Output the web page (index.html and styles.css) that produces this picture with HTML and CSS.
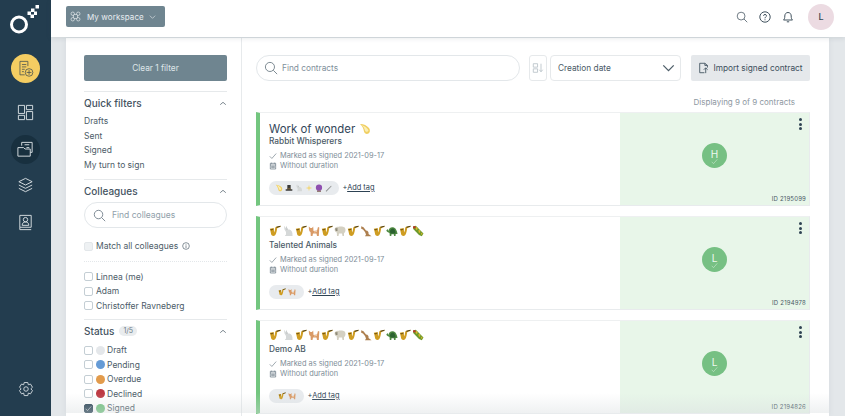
FILE: index.html
```html
<!DOCTYPE html>
<html lang="en">
<head>
<meta charset="utf-8">
<title>Contracts</title>
<link rel="stylesheet" href="styles.css">
</head>
<body>
<svg class="defs" width="0" height="0" aria-hidden="true">
  <symbol id="sax" viewBox="0 0 12 12"><path d="M11.500 .8 7 1.700 6.200 2.800 5.500 7.500 4.500 4 5 3 .8 3.800 1.200 5 2.200 9.500C2.600 11 5 11.500 6.300 10 7.500 8.500 7.800 5 8.300 3L11.500 2Z" fill="#cf9d22"/><path d="M1.200 4.300 4.300 3.700 4.800 4.500 2 5.500Z" fill="#7a5a12"/><path d="M7 2 11.500 .8 11.500 1.600 8 2.800Z" fill="#3c3420"/></symbol>
  <symbol id="rabbit" viewBox="0 0 12 12"><path d="M2 .8 5 4.500 7.500 4.500C9.500 5 10.800 7 10.500 11H3.500C2.500 11 3 10 4 9.800L4 7 2.500 4.500Z" fill="#d5d8d8"/><path d="M4 .8 6 4.500 4.500 5Z" fill="#b9bdbd"/></symbol>
  <symbol id="cat" viewBox="0 0 12 12"><path d="M.8 1.500 2.500 3H4L5.200 1.500 5.500 6 9 5.500 10 2 11.300 2.500 10.800 11H9L8.500 8.500H5L4.500 11H2.800L2.500 7C1.300 6.500 .8 5 .8 1.500Z" fill="#d99a66"/><path d="M6 6.500 9 6V7L6 7.500Z" fill="#f0d0b0"/></symbol>
  <symbol id="sheep" viewBox="0 0 12 12"><path d="M.6 4.500C.6 2.500 3 1.500 4 2 6 1.300 9.500 1.500 11 2.800 12 5 11.500 7.500 10 8.300V11H8.500L8 8.500H5L4.500 11H3L2.800 7.500C1.500 7 .6 6 .6 4.500Z" fill="#d4d0c2"/><path d="M1 3.500 3.500 3 3.500 6 1.800 6Z" fill="#8f8a78"/></symbol>
  <symbol id="roo" viewBox="0 0 12 12"><path d="M1.200 1.200 3.500 2.200 6 5.500C8 5.500 9 7.500 8.500 9L11.500 11.200H5L6 9.500 5 7 3 4.500 1.200 3.800Z" fill="#ad7f4f"/></symbol>
  <symbol id="turtle" viewBox="0 0 12 12"><path d="M2.500 6C2.500 3 5 1.800 7 2.200 9.500 2.500 11 5.500 11.500 9H9.700L9.500 11H8L7.800 9.300H5.500L5.300 11H3.800L3.500 8C2.300 7.500 .5 6.500 .3 5.500L1.500 4Z" fill="#4f8a42"/><path d="M4 6.500C4.500 3.500 6.500 3 8 4 9.200 5 9.500 7 9.500 8.500H4.500Z" fill="#2c6230"/></symbol>
  <symbol id="bug" viewBox="0 0 12 12"><path d="M1.200 1.500 3.800 .8 11.500 8.500 9.800 11.300 7 10 1.200 4Z" fill="#6d9a2c"/><path d="M3.300 2.500 4.800 2 5.800 4 4.300 5ZM6.300 5.200 7.800 5 8.500 7 7 8ZM9 8 10 7.800 10.500 9 9.500 10Z" fill="#e0b62c"/><circle cx="2.300" cy="2.300" r="1.300" fill="#b5382a"/></symbol>
  <symbol id="comet" viewBox="0 0 12 12"><path d="M1 1C4 .8 8 2.500 10 5 11.500 7 11 9.500 9.500 10.500 7.500 11.500 5.500 10.500 5 8.500 4.500 6 3.500 3 1 1Z" fill="#f0cf62"/><path d="M2.500 2C6 3 8.500 5 9.500 7.500 8.500 9.500 6.500 9 6 7.500 5.500 5.500 4.500 3.500 2.500 2Z" fill="#fbeeb4"/></symbol>
  <symbol id="hat" viewBox="0 0 12 12"><path d="M3.500 1.500H8.500V8H11V10H1V8H3.500Z" fill="#3a3a38"/><path d="M3.500 6.500H8.500V8H3.500Z" fill="#8a6b3c"/></symbol>
  <symbol id="spark" viewBox="0 0 12 12"><path d="M6 1 7 5 11 6 7 7 6 11 5 7 1 6 5 5Z" fill="#f2d779"/></symbol>
  <symbol id="ball" viewBox="0 0 12 12"><circle cx="6" cy="5.500" r="4.700" fill="#8f4fb0"/><path d="M3 10H9V11.500H3Z" fill="#6d4a3a"/></symbol>
  <symbol id="wand" viewBox="0 0 12 12"><path d="M1 10.500 9 2.500 10 3.500 2 11.500Z" fill="#8d8f90"/><path d="M9 1.500 10.500 3 9.500 4Z" fill="#dedede"/></symbol>
  <symbol id="check" viewBox="0 0 12 12"><path d="M1.200 6.500 4.300 9.700 10.800 2.300" fill="none" stroke="currentColor" stroke-width=".9"/></symbol>
  <symbol id="cal" viewBox="0 0 12 12"><path d="M2 2H10V10.500H2ZM2 4.500H10M3.500 1V2.500M8.500 1V2.500M4 6.500H8V8.500H4Z" fill="none" stroke="currentColor"/></symbol>
  <symbol id="search" viewBox="0 0 16 16"><circle cx="6.800" cy="6.800" r="5.200" fill="none" stroke="currentColor"/><path d="M10.600 10.600 15 15" stroke="currentColor" fill="none"/></symbol>
  <symbol id="chev" viewBox="0 0 10 6"><path d="M1 1 5 5 9 1" fill="none" stroke="currentColor"/></symbol>
  <symbol id="up" viewBox="0 0 10 6"><path d="M1.500 4.500 5 1.500 8.500 4.500" fill="none" stroke="currentColor"/></symbol>
</svg>

<div class="app">
  <nav class="rail">
    <svg class="logo" viewBox="0 0 51 38" width="51" height="38" aria-label="Logo">
      <circle cx="19" cy="24.500" r="7.500" fill="none" stroke="#fff" stroke-width="3"/>
      <path d="M35.500 5h3.500v3.500h-3.500zM31 8.500h3.500V12H31zM34 11.500h3V15h-3zM27.500 11.500H31V15h-3.500zM30.500 14.500H34V18h-3.500z" fill="#fff"/>
    </svg>
    <div class="rail-btn rail-yellow">
      <svg viewBox="0 0 24 24" width="19" height="19" fill="none" stroke="#4a5250"><path d="M15 9V3H5V20H11M7.500 7H13M7.500 10H13M7.500 13H11M7.500 16H10"/><circle cx="16.500" cy="17" r="4.800"/><path d="M16.500 14V20M13.500 17H19.500"/></svg>
    </div>
    <div class="rail-btn">
      <svg viewBox="0 0 20 20" width="19" height="19" fill="none" stroke="#d7dee2"><path d="M2.500 2.500H9V11H2.500ZM11 2.500H17.500V7H11ZM11 9H17.500V17.500H11ZM2.500 13H9V17.500H2.500Z"/></svg>
    </div>
    <div class="rail-btn rail-dark">
      <svg viewBox="0 0 20 20" width="19" height="19" fill="none" stroke="#d7dee2"><path d="M6 6V2.500H17V13H15M2 8H8L9.500 9.500H15V17H2ZM9 5H14M11 8H14"/></svg>
    </div>
    <div class="rail-btn">
      <svg viewBox="0 0 20 20" width="19" height="19" fill="none" stroke="#d7dee2"><path d="M10 2.500 17 6 10 9.500 3 6ZM3 9.500 10 13 17 9.500M3 13 10 16.500 17 13"/></svg>
    </div>
    <div class="rail-btn">
      <svg viewBox="0 0 20 20" width="19" height="19" fill="none" stroke="#d7dee2"><path d="M4 2.500H16V15H4ZM4 15V17.500H16M6.500 13C6.500 10.500 8 9.500 10 9.500S13.500 10.500 13.500 13Z"/><circle cx="10" cy="7" r="2.300"/></svg>
    </div>
    <div class="rail-btn rail-gear">
      <svg viewBox="0 0 20 20" width="18" height="18" fill="none" stroke="#d7dee2"><path d="M8 2H12L12.600 4.500 15 3.700 17.200 7.300 15.400 9 17.200 11 15 14.600 12.600 13.700 12 16.500H8L7.400 13.700 5 14.600 2.800 11 4.600 9 2.800 7.300 5 3.700 7.400 4.500Z" transform="translate(0 .8)"/><circle cx="10" cy="10" r="2.500"/></svg>
    </div>
  </nav>

  <div class="shell">
    <header class="topbar">
      <button class="workspace">
        <svg viewBox="0 0 16 16" width="11" height="11" fill="none" stroke="#e6ebee"><circle cx="4" cy="4" r="2.500"/><circle cx="12" cy="4" r="2.500"/><circle cx="4" cy="12" r="2.500"/><circle cx="12" cy="12" r="2.500"/><path d="M5 6V10M11 6V10M6 5H10M6 11H10"/></svg>
        <span>My workspace</span>
        <svg class="ws-chev" width="7" height="4"><use href="#chev"/></svg>
      </button>
      <div class="top-icons">
        <svg width="12" height="12" class="ti"><use href="#search"/></svg>
        <svg class="ti" viewBox="0 0 12 12" width="12" height="12" fill="none" stroke="currentColor"><circle cx="6" cy="6" r="5.200"/><path d="M4.500 4.800C4.500 3 7.500 3 7.500 4.800 7.500 6 6 6 6 7.300M6 8.300V9.300"/></svg>
        <svg class="ti" viewBox="0 0 12 12" width="12" height="12" fill="none" stroke="currentColor"><path d="M1.500 9H10.500C9.500 8 9.200 7 9.200 5 9.200 3 8 1.500 6 1.500S2.800 3 2.800 5C2.800 7 2.500 8 1.500 9ZM4.800 10.800H7.200"/></svg>
        <div class="me">L</div>
      </div>
    </header>

    <main class="panel">
      <aside class="filters">
        <button class="clear">Clear 1 filter</button>
        <section class="fsec fsec-quick">
          <h3>Quick filters <svg width="8" height="5"><use href="#up"/></svg></h3>
          <ul class="links"><li>Drafts</li><li>Sent</li><li>Signed</li><li>My turn to sign</li></ul>
        </section>
        <section class="fsec fsec-coll">
          <h3>Colleagues <svg width="8" height="5"><use href="#up"/></svg></h3>
          <div class="field field-sm">
            <svg width="13" height="13"><use href="#search"/></svg>
            <span>Find colleagues</span>
          </div>
          <div class="match">
            <span class="box box-fill"></span>Match all colleagues
            <svg viewBox="0 0 12 12" width="8" height="8" fill="none" stroke="currentColor"><circle cx="6" cy="6" r="5"/><path d="M6 5V9M6 3V4"/></svg>
          </div>
          <div class="checks">
            <div class="chk"><span class="box"></span>Linnea (me)</div>
            <div class="chk"><span class="box"></span>Adam</div>
            <div class="chk"><span class="box"></span>Christoffer Ravneberg</div>
          </div>
        </section>
        <section class="fsec fsec-status">
          <h3><span class="st">Status <em>1/5</em></span> <svg width="8" height="5"><use href="#up"/></svg></h3>
          <div class="chk"><span class="box"></span><i class="dot dot-draft"></i>Draft</div>
          <div class="chk"><span class="box"></span><i class="dot dot-pending"></i>Pending</div>
          <div class="chk"><span class="box"></span><i class="dot dot-overdue"></i>Overdue</div>
          <div class="chk"><span class="box"></span><i class="dot dot-declined"></i>Declined</div>
          <div class="chk"><span class="box box-on"><svg width="7" height="7"><use href="#check"/></svg></span><i class="dot dot-signed"></i>Signed</div>
        </section>
      </aside>

      <section class="list">
        <div class="toolbar">
          <div class="field field-lg">
            <svg width="14" height="14"><use href="#search"/></svg>
            <span>Find contracts</span>
          </div>
          <div class="sort">
            <svg viewBox="0 0 14 14" width="14" height="14" fill="none" stroke="#b9c2c8"><path d="M1.500 2H6.500V6H1.500ZM1.500 8H6.500V12H1.500ZM10.500 2V11M8.500 9 10.500 11.500 12.500 9"/></svg>
          </div>
          <div class="select">Creation date <svg width="13" height="8"><use href="#chev"/></svg></div>
          <button class="import">
            <svg viewBox="0 0 14 14" width="12" height="12" fill="none" stroke="#3d4f5c"><path d="M7.500 12.500H2V1.500H8L11 4V6.500M8 1.500V4H11M9 13V7M6.800 9 9 6.800 11.200 9"/></svg>
            Import signed contract
          </button>
        </div>
        <p class="count">Displaying 9 of 9 contracts</p>

        <article class="card">
          <div class="info">
            <h2 class="title">Work of wonder <svg class="em-title" width="12" height="12"><use href="#comet"/></svg></h2>
            <p class="org">Rabbit Whisperers</p>
            <p class="meta"><svg width="8" height="8"><use href="#check"/></svg>Marked as signed 2021-09-17</p>
            <p class="meta"><svg width="8" height="8"><use href="#cal"/></svg>Without duration</p>
            <div class="tags">
              <span class="tag"><svg width="8" height="8"><use href="#comet"/></svg><svg width="8" height="8"><use href="#hat"/></svg><svg width="8" height="8"><use href="#rabbit"/></svg><svg width="8" height="8"><use href="#spark"/></svg><svg width="8" height="8"><use href="#ball"/></svg><svg width="8" height="8"><use href="#wand"/></svg></span>
              <span class="add">+<u>Add tag</u></span>
            </div>
          </div>
          <div class="side">
            <span class="more"><b></b><b></b><b></b></span>
            <div class="avatar">H<svg width="7" height="7"><use href="#check"/></svg></div>
            <span class="cid">ID 2195099</span>
          </div>
        </article>

        <article class="card">
          <div class="info">
            <h2 class="title title-em"><svg width="12" height="12"><use href="#sax"/></svg><svg width="12" height="12"><use href="#rabbit"/></svg><svg width="12" height="12"><use href="#sax"/></svg><svg width="12" height="12"><use href="#cat"/></svg><svg width="12" height="12"><use href="#sax"/></svg><svg width="12" height="12"><use href="#sheep"/></svg><svg width="12" height="12"><use href="#sax"/></svg><svg width="12" height="12"><use href="#roo"/></svg><svg width="12" height="12"><use href="#sax"/></svg><svg width="12" height="12"><use href="#turtle"/></svg><svg width="12" height="12"><use href="#sax"/></svg><svg width="12" height="12"><use href="#bug"/></svg></h2>
            <p class="org">Talented Animals</p>
            <p class="meta"><svg width="8" height="8"><use href="#check"/></svg>Marked as signed 2021-09-17</p>
            <p class="meta"><svg width="8" height="8"><use href="#cal"/></svg>Without duration</p>
            <div class="tags">
              <span class="tag"><svg width="8" height="8"><use href="#sax"/></svg><svg width="8" height="8"><use href="#cat"/></svg></span>
              <span class="add">+<u>Add tag</u></span>
            </div>
          </div>
          <div class="side">
            <span class="more"><b></b><b></b><b></b></span>
            <div class="avatar">L<svg width="7" height="7"><use href="#check"/></svg></div>
            <span class="cid">ID 2194978</span>
          </div>
        </article>

        <article class="card">
          <div class="info">
            <h2 class="title title-em"><svg width="12" height="12"><use href="#sax"/></svg><svg width="12" height="12"><use href="#rabbit"/></svg><svg width="12" height="12"><use href="#sax"/></svg><svg width="12" height="12"><use href="#cat"/></svg><svg width="12" height="12"><use href="#sax"/></svg><svg width="12" height="12"><use href="#sheep"/></svg><svg width="12" height="12"><use href="#sax"/></svg><svg width="12" height="12"><use href="#roo"/></svg><svg width="12" height="12"><use href="#sax"/></svg><svg width="12" height="12"><use href="#turtle"/></svg><svg width="12" height="12"><use href="#sax"/></svg><svg width="12" height="12"><use href="#bug"/></svg></h2>
            <p class="org">Demo AB</p>
            <p class="meta"><svg width="8" height="8"><use href="#check"/></svg>Marked as signed 2021-09-17</p>
            <p class="meta"><svg width="8" height="8"><use href="#cal"/></svg>Without duration</p>
            <div class="tags">
              <span class="tag"><svg width="8" height="8"><use href="#sax"/></svg><svg width="8" height="8"><use href="#cat"/></svg></span>
              <span class="add">+<u>Add tag</u></span>
            </div>
          </div>
          <div class="side">
            <span class="more"><b></b><b></b><b></b></span>
            <div class="avatar">L<svg width="7" height="7"><use href="#check"/></svg></div>
            <span class="cid">ID 2194826</span>
          </div>
        </article>
      </section>
    </main>
    <div class="fade"></div>
  </div>
</div>
</body>
</html>
```

FILE: styles.css
```css
* { box-sizing: border-box; }
html, body { margin: 0; height: 100%; overflow: hidden; }
body { font-family: Inter, "Noto Sans", "Liberation Sans", sans-serif; color: #3d4f5c; background: #fff; }
.defs { position: absolute; }
h2, h3, p, ul { margin: 0; padding: 0; }
button { font: inherit; border: 0; }
svg { display: block; flex: none; }

.app { display: flex; width: 845px; height: 416px; }

.rail { width: 51px; background: #233d4f; display: flex; flex-direction: column; align-items: center; }
.logo { margin-bottom: 16px; }
.rail-btn { width: 29px; height: 29px; border-radius: 50%; display: flex; align-items: center; justify-content: center; margin-bottom: 7.500px; }
.rail-yellow { background: #f4cd62; margin-bottom: 15px; }
.rail-dark { background: #18303f; }
.rail-gear { margin-top: auto; margin-bottom: 12.500px; }

.shell { position: relative; flex: 1; min-width: 0; background: #e3e7ea; display: flex; flex-direction: column; }
.topbar { height: 37px; flex: none; background: #fff; display: flex; align-items: center; justify-content: space-between; padding: 0 11px 4px 15px; box-shadow: 0 1px 5px rgba(60, 75, 85, .14); position: relative; z-index: 2; }
.workspace { display: flex; align-items: center; height: 21px; width: 99px; background: #6f8590; color: #e8edf0; border-radius: 2px; padding: 0 4px; font-size: 8px; }
.workspace span { margin-left: 6px; white-space: nowrap; letter-spacing: .1px; }
.ws-chev { margin-left: 5px; color: #dfe5e8; }
.top-icons { display: flex; align-items: center; color: #41525e; }
.ti { margin-right: 11px; }
.ti + .me { margin-left: 3px; }
.me { width: 26px; height: 26px; border-radius: 50%; background: #ecdbe2; display: flex; align-items: center; justify-content: center; font-size: 9px; font-weight: 500; color: #33444f; }

.panel { flex: 1; min-height: 0; margin: 1px 16px 0 15px; background: #fff; display: flex; overflow: hidden; box-shadow: 0 0 6px rgba(60, 75, 85, .08); }

.filters { width: 176px; flex: none; padding: 17px 14px 0 18px; border-right: 1px solid #e7eaec; font-size: 8.500px; }
.clear { display: block; width: 100%; height: 26px; background: #6f8590; color: #dfe6ea; border-radius: 2px; font-size: 8.300px; }
.fsec { border-top: 1px solid #e6e9eb; padding-top: 5px; }
h3 { display: flex; align-items: center; justify-content: space-between; font-size: 10px; font-weight: 500; line-height: 13px; color: #44535f; margin-bottom: 4px; }
h3 svg { color: #5c6a74; }
.links { list-style: none; margin-top: 1px; }
.links li { line-height: 14.600px; color: #4c5c68; }
.fsec-quick { margin-top: 10px; }
.fsec-coll { margin-top: 7px; }
.fsec-status { margin-top: 6px; }
.fsec-status h3 { margin-bottom: 5px; }
.field { display: flex; align-items: center; background: #fff; border: 1px solid #e3e7ea; border-radius: 13px; color: #6c7a84; }
.field-sm { height: 26px; padding-left: 8px; gap: 6px; margin-top: 2px; color: #657480; }
.field-sm span { color: #90a0aa; }
.match { display: flex; align-items: center; height: 14px; margin-top: 11px; color: #4c5c68; }
.match svg { margin-left: 4px; }
.checks { border-top: 1px dotted #e3e7ea; margin-top: 8px; padding-top: 7px; }
.chk { display: flex; align-items: center; height: 14.500px; color: #4c5c68; white-space: nowrap; }
.box { width: 9px; height: 9px; border: 1px solid #c4ced4; border-radius: 2px; margin-right: 3px; display: flex; align-items: center; justify-content: center; flex: none; }
.box-fill { background: #eef1f3; border-color: #e3e7ea; }
.box-on { background: #233d4f; border-color: #233d4f; color: #fff; }
.dot { width: 9px; height: 9px; border-radius: 50%; margin-right: 2px; flex: none; }
.dot-draft { background: #e4e7ea; }
.dot-pending { background: #659bd6; }
.dot-overdue { background: #e29b4c; }
.dot-declined { background: #bd3a43; }
.dot-signed { background: #6fc07d; }
.st { display: flex; align-items: center; gap: 5px; }
.st em { font-style: normal; font-size: 7px; font-weight: 400; background: #e9ecee; color: #6c7a84; border-radius: 6px; padding: 1px 4px; line-height: 8px; }

.list { flex: 1; min-width: 0; padding: 17px 19px 0 14px; }
.toolbar { display: flex; align-items: stretch; height: 26px; font-size: 8.300px; }
.field-lg { width: 264px; padding-left: 7px; gap: 4px; }
.field-lg span { color: #7f909b; }
.sort { width: 18px; margin-left: 9px; border: 1px solid #e6e9eb; border-radius: 3px; display: flex; align-items: center; justify-content: center; }
.sort svg { width: 12px; height: 12px; }
.select { width: 131px; margin-left: 3px; border: 1px solid #e6e9eb; border-radius: 4px; padding: 0 5px 0 7px; display: flex; align-items: center; justify-content: space-between; color: #4a5a66; }
.select svg { color: #4d5d68; }
.import { width: 119px; margin-left: 10px; background: #e5e8eb; border-radius: 2px; color: #3d4f5c; display: flex; align-items: center; justify-content: center; gap: 3px; font-size: 8.300px; padding: 0; }
.count { text-align: right; font-size: 8px; color: #8d979f; line-height: 10px; margin: 16px 15px 5px 0; }

.card { display: flex; height: 94px; margin-bottom: 10px; border: 1px solid #e8ebed; border-left: 4px solid #73c67f; border-top-color: #eef0f1; }
.info { flex: 1; min-width: 0; padding: 7px 0 0 9px; }
.title { display: flex; align-items: center; gap: 3px; font-size: 11.400px; font-weight: 400; line-height: 14px; color: #33465a; height: 17px; }
.title-em { gap: 1px; height: 14px; }
.em-title { margin-left: 1px; }
.org { font-size: 8.300px; font-weight: 500; line-height: 10px; color: #4a5a66; margin-top: -1px; }
.title-em + .org { margin-top: 2px; }
.meta { display: flex; align-items: center; gap: 3px; font-size: 7.400px; line-height: 10.500px; color: #7e8d98; }
.org + .meta { margin-top: 4.500px; }
.meta svg { color: #5f6f7b; }
.tags { display: flex; align-items: center; gap: 3.500px; margin-top: 9px; }
.tag { display: flex; align-items: center; justify-content: center; gap: 2px; height: 14px; padding: 0 6px; background: #e8ebee; border-radius: 7px; min-width: 35px; }
.add { font-size: 7.400px; color: #2d4253; }

.side { position: relative; width: 189px; flex: none; background: #e8f6e9; display: flex; align-items: center; justify-content: center; padding-bottom: 8px; }
.avatar { width: 25px; height: 25px; border-radius: 50%; background: #76c083; color: #eef8f0; font-size: 10px; display: flex; flex-direction: column; align-items: center; justify-content: center; line-height: 11px; padding-top: 3px; }
.avatar svg { color: #d8efdc; margin-top: -2px; }
.more { position: absolute; right: 7px; top: 5px; display: flex; flex-direction: column; gap: 1.500px; }
.more b { display: block; width: 3px; height: 3px; border-radius: 50%; background: #2f4353; }
.cid { position: absolute; right: 3px; bottom: 2px; font-size: 6px; color: #4a5a66; letter-spacing: .2px; line-height: 8px; }

.fade { position: absolute; left: 15px; right: 16px; bottom: 3px; height: 20px; background: linear-gradient(to bottom, rgba(215, 220, 222, 0), rgba(215, 220, 222, .4)); pointer-events: none; }
```
